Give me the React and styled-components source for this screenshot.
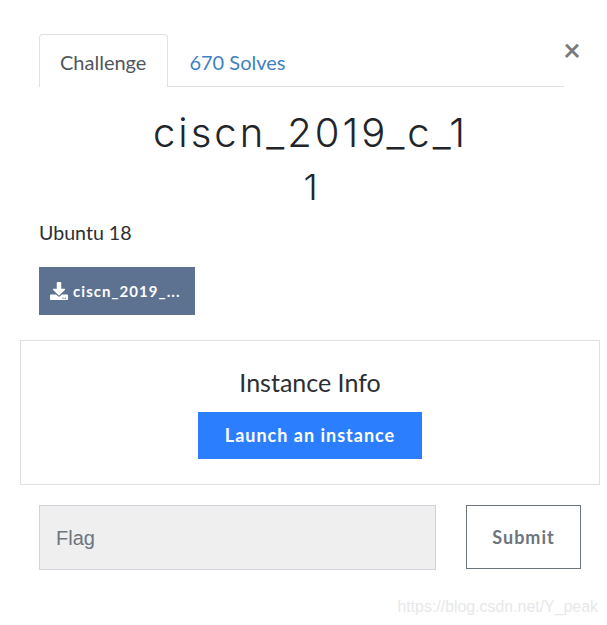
import React from "react";
import styled, { createGlobalStyle } from "styled-components";
import { FaDownload } from "react-icons/fa";

const GlobalStyle = createGlobalStyle`
  html, body {
    margin: 0;
    padding: 0;
    background: #fff;
    font-family: "Lato", sans-serif;
    color: #212529;
  }
`;

const Modal = styled.div`
  position: relative;
  width: 607px;
  height: 625px;
  overflow: hidden;
  padding: 34px 7px 0 20px;
  box-sizing: border-box;
`;

const Body = styled.div`
  padding: 0 19px;
`;

const Tabs = styled.nav`
  display: flex;
  width: 525px;
  height: 53px;
  box-sizing: border-box;
  border-bottom: 1px solid #dee2e6;
`;

const Tab = styled.a`
  box-sizing: border-box;
  height: ${(p) => (p.$active ? "53px" : "52px")};
  padding: 15px 21px 0 20px;
  font-size: 20px;
  line-height: 24px;
  color: ${(p) => (p.$active ? "#50565c" : "#3f7fc4")};
  background: #fff;
  border: 1px solid ${(p) => (p.$active ? "#dee2e6" : "transparent")};
  border-bottom: 0;
  border-radius: 4px 4px 0 0;
`;

const Close = styled.span`
  position: absolute;
  left: 560px;
  top: 32px;
  width: 24px;
  font-size: 30px;
  line-height: 34px;
  text-align: center;
  font-weight: 700;
  color: #7b7b7b;
`;

const Title = styled.h3`
  margin: ${(p) => p.$top}px 0 0;
  width: 543px;
  text-align: center;
  font-family: "Inter", sans-serif;
  font-weight: 300;
  font-size: ${(p) => p.$size}px;
  line-height: 55px;
  letter-spacing: ${(p) => p.$spacing}px;
`;

const Description = styled.p`
  margin: 6px 0 0;
  font-size: 19.6px;
  line-height: 24px;
  color: #2b2f33;
`;

const FileButton = styled.a`
  display: inline-flex;
  align-items: center;
  gap: 5px;
  box-sizing: border-box;
  width: 156px;
  height: 48px;
  margin-top: 22px;
  padding-left: 11px;
  background: #5c7290;
  color: #fff;
  font-size: 15px;
  font-weight: 700;
  letter-spacing: 1.05px;
`;

const InstanceCard = styled.section`
  box-sizing: border-box;
  width: 580px;
  height: 145px;
  margin-top: 25px;
  padding-top: 26px;
  border: 1px solid #dfdfdf;
  text-align: center;
`;

const InstanceTitle = styled.h4`
  margin: 0;
  font-size: 25px;
  font-weight: 400;
  line-height: 30px;
  color: #2b2f33;
`;

const LaunchButton = styled.button`
  display: block;
  width: 224px;
  height: 47px;
  margin: 15px auto 0;
  padding: 0 0 2px;
  border: 0;
  background: #2b7fff;
  color: #fff;
  font-family: "Lato", sans-serif;
  font-size: 18px;
  font-weight: 700;
  letter-spacing: 1px;
`;

const FlagRow = styled.form`
  display: flex;
  align-items: flex-start;
  gap: 30px;
  margin-top: 20px;
`;

const FlagInput = styled.input`
  box-sizing: border-box;
  width: 397px;
  height: 65px;
  padding: 2px 16px 0;
  background: #efefef;
  border: 1px solid #ced4da;
  font-family: "Liberation Sans", sans-serif;
  font-size: 20px;
  &::placeholder {
    color: #6c757d;
    opacity: 1;
  }
`;

const SubmitButton = styled.button`
  box-sizing: border-box;
  width: 115px;
  height: 64px;
  padding: 0;
  background: #fff;
  border: 1px solid #6c757d;
  color: #6c757d;
  font-family: "Lato", sans-serif;
  font-size: 18px;
  font-weight: 700;
  letter-spacing: 1px;
`;

const Watermark = styled.span`
  position: absolute;
  right: 9px;
  top: 597px;
  font-family: "Liberation Sans", sans-serif;
  font-size: 15.9px;
  line-height: 20px;
  color: #e8e8e8;
`;

export default function App() {
  return (
    <Modal>
      <GlobalStyle />
      <Close>×</Close>
      <Body>
        <Tabs>
          <Tab $active>Challenge</Tab>
          <Tab>670 Solves</Tab>
        </Tabs>
        <Title $top={18} $size={40} $spacing={3}>ciscn_2019_c_1</Title>
        <Title $top={0} $size={36} $spacing={0}>1</Title>
        <Description>Ubuntu 18</Description>
        <FileButton>
          <FaDownload size={18} />
          ciscn_2019_...
        </FileButton>
      </Body>
      <InstanceCard>
        <InstanceTitle>Instance Info</InstanceTitle>
        <LaunchButton type="button">Launch an instance</LaunchButton>
      </InstanceCard>
      <Body>
        <FlagRow>
          <FlagInput placeholder="Flag" />
          <SubmitButton type="button">Submit</SubmitButton>
        </FlagRow>
      </Body>
      <Watermark>https://blog.csdn.net/Y_peak</Watermark>
    </Modal>
  );
}
